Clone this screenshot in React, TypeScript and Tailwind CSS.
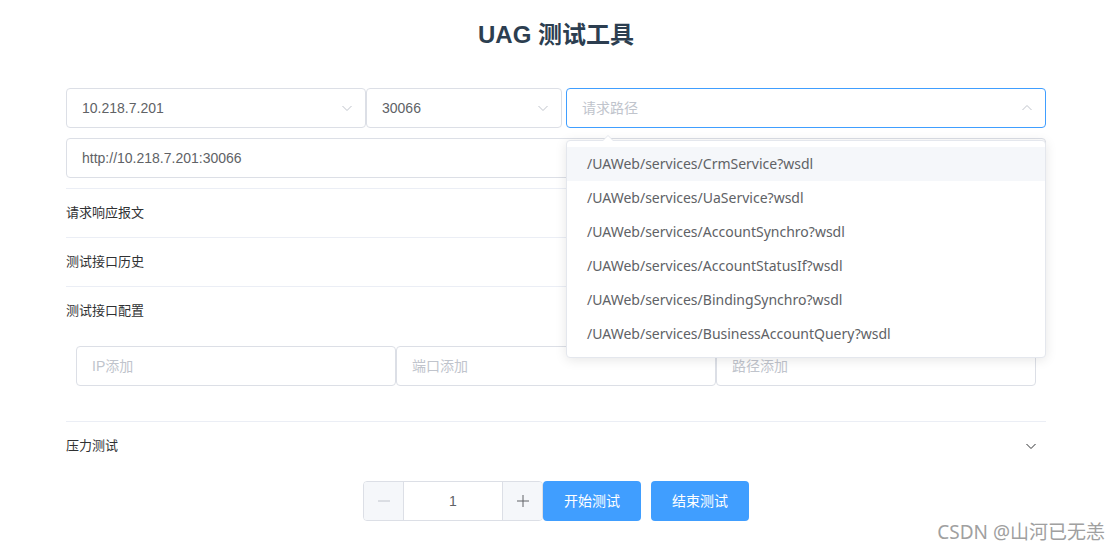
import React from 'react';

const font = { fontFamily: '"Liberation Sans", "Noto Sans CJK SC", sans-serif' };

const paths = [
  '/UAWeb/services/CrmService?wsdl',
  '/UAWeb/services/UaService?wsdl',
  '/UAWeb/services/AccountSynchro?wsdl',
  '/UAWeb/services/AccountStatusIf?wsdl',
  '/UAWeb/services/BindingSynchro?wsdl',
  '/UAWeb/services/BusinessAccountQuery?wsdl',
];

const Chevron = ({ up = false, className = '' }: { up?: boolean; className?: string }) => (
  <svg width="12" height="12" viewBox="0 0 12 12" className={className}>
    <path
      d={up ? 'M1.5 8 L6 3.5 L10.5 8' : 'M1.5 4 L6 8.5 L10.5 4'}
      fill="none"
      stroke="currentColor"
      strokeWidth="1"
    />
  </svg>
);

const Select = ({ value, placeholder, width, focused = false, open = false }: {
  value?: string; placeholder?: string; width: string; focused?: boolean; open?: boolean;
}) => (
  <div
    className={`${width} h-10 rounded border ${focused ? 'border-[#409eff]' : 'border-[#dcdfe6]'} flex items-center justify-between pl-[15px] pr-[12px] text-[14px] bg-white`}
  >
    <span className={value ? 'text-[#606266]' : 'text-[#c0c4cc]'}>{value || placeholder}</span>
    <Chevron up={open} className="text-[#c0c4cc]" />
  </div>
);

const CollapseHeader = ({ title, noBorder = false }: { title: string; noBorder?: boolean }) => (
  <div className={`flex items-center justify-between text-[13px] text-[#303133] ${noBorder ? 'h-12' : 'h-[49px] border-b border-[#ebeef5]'}`}>
    <span>{title}</span>
    <Chevron className="text-[#303133] mr-[9px]" />
  </div>
);

export default function App() {
  return (
    <div className="relative w-[1120px] h-[551px] bg-white overflow-hidden" style={font}>
      <h1 className="pt-[20px] text-center text-[24px] leading-[30px] font-bold text-[#2c3e50] pr-[8px]">
        UAG 测试工具
      </h1>

      <div className="w-[980px] ml-[66px] mt-[38px]">
        <div className="flex">
          <Select value="10.218.7.201" width="w-[300px]" />
          <Select value="30066" width="w-[196px]" />
          <div className="ml-[4px] flex-1 relative">
            <Select placeholder="请求路径" width="w-full" focused open />
            {/* dropdown panel of the path select */}
            <div className="absolute left-0 right-0 top-[52px] z-10 bg-white border border-[#e4e7ed] rounded shadow-[0_2px_12px_0_rgba(0,0,0,0.1)] py-[6px]">
              <div className="absolute -top-[6px] left-[35px] w-0 h-0 border-l-[6px] border-r-[6px] border-b-[6px] border-l-transparent border-r-transparent border-b-[#e4e7ed]" />
              <div className="absolute -top-[5px] left-[36px] w-0 h-0 border-l-[5px] border-r-[5px] border-b-[5px] border-l-transparent border-r-transparent border-b-white" />
              {paths.map((p, i) => (
                <div
                  key={p}
                  className={`h-[34px] leading-[34px] px-[20px] text-[14px] text-[#606266] font-['Noto_Sans',sans-serif] ${i === 0 ? 'bg-[#f5f7fa]' : ''}`}
                >
                  {p}
                </div>
              ))}
            </div>
          </div>
        </div>

        <div className="mt-[10px] h-10 rounded border border-[#dcdfe6] flex items-center px-[15px] text-[14px] text-[#606266]">
          http://10.218.7.201:30066
        </div>

        <div className="mt-[10px] border-t border-[#ebeef5]">
          <CollapseHeader title="请求响应报文" />
          <CollapseHeader title="测试接口历史" />
          <div className="border-b border-[#ebeef5]">
            <CollapseHeader title="测试接口配置" noBorder />
            <div className="px-[10px] pt-[11px] pb-[35px] flex">
              {['IP添加', '端口添加', '路径添加'].map((t) => (
                <div key={t} className="w-[320px] h-10 rounded border border-[#dcdfe6] flex items-center px-[15px] text-[14px] text-[#c0c4cc]">
                  {t}
                </div>
              ))}
            </div>
          </div>
          <CollapseHeader title="压力测试" noBorder />
        </div>

        <div className="mt-[11px] flex justify-center">
          <div className="flex h-10 w-[180px] rounded border border-[#dcdfe6] overflow-hidden">
            <div className="w-10 bg-[#f5f7fa] border-r border-[#dcdfe6] flex items-center justify-center text-[#c0c4cc]">
              <svg width="14" height="14" viewBox="0 0 14 14"><path d="M1 7 H13" stroke="currentColor" strokeWidth="1" /></svg>
            </div>
            <div className="flex-1 flex items-center justify-center text-[14px] text-[#606266]">1</div>
            <div className="w-10 bg-[#f5f7fa] border-l border-[#dcdfe6] flex items-center justify-center text-[#606266]">
              <svg width="14" height="14" viewBox="0 0 14 14"><path d="M1 7 H13 M7 1 V13" stroke="currentColor" strokeWidth="1" /></svg>
            </div>
          </div>
          <button className="w-[98px] h-10 rounded bg-[#409eff] text-white text-[14px]">开始测试</button>
          <button className="ml-[10px] w-[98px] h-10 rounded bg-[#409eff] text-white text-[14px]">结束测试</button>
        </div>
      </div>

      <div className="absolute right-[15px] bottom-[5px] text-[19px] text-[#a0a0a0] font-['Noto_Sans','Noto_Sans_CJK_SC',sans-serif]">CSDN @山河已无恙</div>
    </div>
  );
}
